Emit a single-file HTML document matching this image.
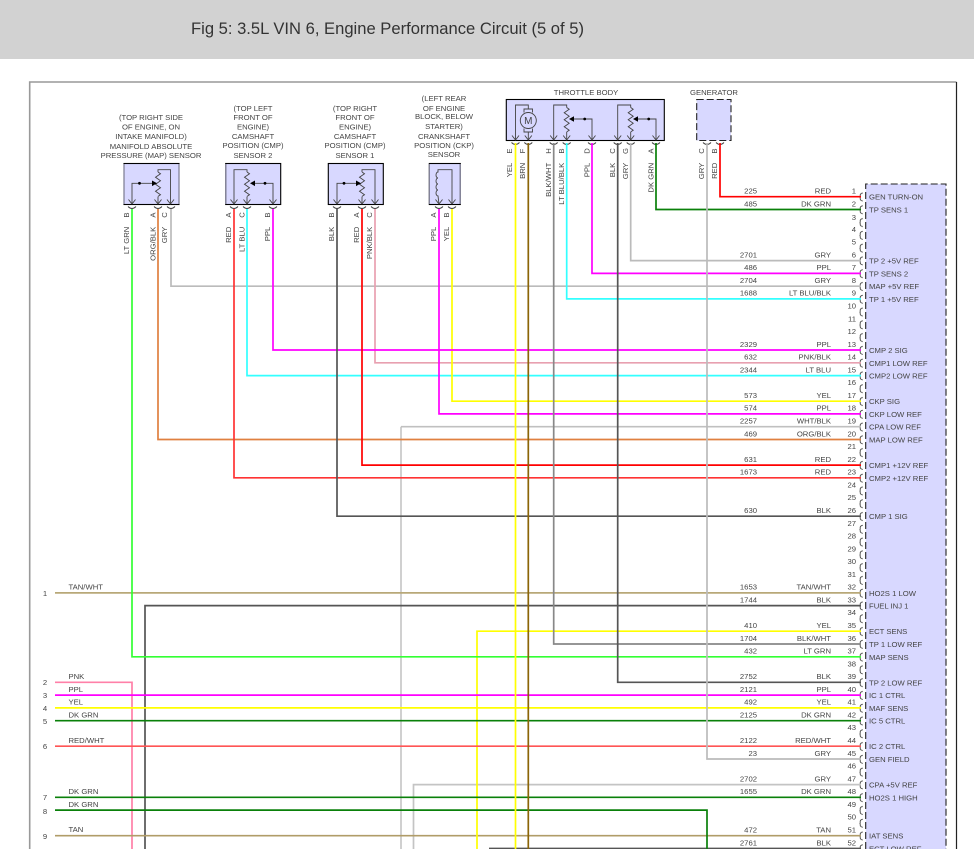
<!DOCTYPE html>
<html><head><meta charset="utf-8"><title>Fig 5</title>
<style>
html,body{margin:0;padding:0;background:#fff;width:974px;height:861px;overflow:hidden}
svg{display:block;position:absolute;left:0;top:0}
text{font-family:"Liberation Sans",Arial,sans-serif;font-size:7.7px;fill:#444}
.e{text-anchor:end}.m{text-anchor:middle}
.w path{fill:none;stroke-width:1.7}
.i{fill:none;stroke:#444;stroke-width:.9}
.b{fill:#d8d8ff;stroke:#000;stroke-width:1.1}
</style></head><body>
<svg width="974" height="861" viewBox="0 0 974 861" xmlns="http://www.w3.org/2000/svg">
<defs>
<pattern id="arc" patternUnits="userSpaceOnUse" x="856" y="190.3" width="10" height="12.78"><path d="M6.8 2.6q-3 .8-2.6 2.8q.2 1.4-.6 1.4q.8.2.6 1.4q-.2 2 2.6 2.6" fill="none" stroke="#444" stroke-width=".9"/></pattern>
</defs>
<rect x="0" y="0" width="974" height="59" fill="#d2d2d2"/>
<text x="191" y="34" textLength="393" lengthAdjust="spacingAndGlyphs" style="font-size:17px;fill:#333">Fig 5: 3.5L VIN 6, Engine Performance Circuit (5 of 5)</text>

<path d="M29.7 849V82H956.5" fill="none" stroke="#999" stroke-width="1.6"/>
<path d="M956.5 82V849" fill="none" stroke="#222" stroke-width="1.2"/>

<!-- ECM block -->
<rect x="865.7" y="184" width="80.3" height="670" fill="#d8d8ff"/>
<path d="M865.7 849V184H946V849" fill="none" stroke="#222" stroke-width="1.1" stroke-dasharray="7 3"/>
<rect x="858" y="190" width="8" height="664" fill="url(#arc)"/>

<!-- sensor boxes -->
<rect class="b" x="124" y="163.5" width="55" height="41"/>
<rect class="b" x="225.7" y="163.5" width="55" height="41"/>
<rect class="b" x="328.3" y="163.5" width="55" height="41"/>
<rect class="b" x="429.3" y="163.5" width="31" height="41"/>
<path d="M124 164V204M179 164V204M225.700 164V204M429.300 164V204M460.300 164V204" fill="none" stroke="#8a8aa0" stroke-width="1.2"/>
<rect class="b" x="506.3" y="99.5" width="158" height="41"/>
<rect x="696.7" y="99.5" width="34.3" height="41" fill="#d8d8ff" stroke="#222" stroke-width="1.1" stroke-dasharray="7 3"/>

<!-- sensor internals -->
<path class="i" d="M132 204V183.3H154M158 196.6V204M170.5 204V169.7H158V172"/>
<path class="i" d="M158 172l2.5 1.7l-5 3.5l5 3.5l-5 3.5l5 3.5l-5 3.500l5 3.500l-2.500 1.700"/>
<path d="M152 180.500l5 2.800l-5 2.800z" fill="#000"/><circle cx="139.500" cy="183.300" r="1.400" fill="#000"/>
<path class="i" d="M128.500 199.500L132 204L135.500 199.500M154.500 199.500L158 204L161.500 199.500M167 199.500L170.500 204L174 199.500"/>

<path class="i" d="M234 204V169.700H247V172M247 196.600V204M273 204V183.300H252"/>
<path class="i" d="M247 172l2.500 1.700l-5 3.500l5 3.500l-5 3.500l5 3.500l-5 3.500l5 3.500l-2.500 1.700"/>
<path d="M255 180.500l-5 2.800l5 2.800z" fill="#000"/><circle cx="265" cy="183.300" r="1.400" fill="#000"/>
<path class="i" d="M230.500 199.500L234 204L237.500 199.500M243.500 199.500L247 204L250.500 199.500M269.500 199.500L273 204L276.500 199.500"/>

<path class="i" d="M337 204V183.300H358M362 196.600V204M375 204V169.700H362V172"/>
<path class="i" d="M362 172l2.500 1.700l-5 3.500l5 3.500l-5 3.500l5 3.500l-5 3.500l5 3.500l-2.500 1.700"/>
<path d="M356 180.500l5 2.800l-5 2.800z" fill="#000"/><circle cx="344" cy="183.300" r="1.400" fill="#000"/>
<path class="i" d="M333.500 199.500L337 204L340.500 199.500M358.500 199.500L362 204L365.500 199.500M371.500 199.500L375 204L378.500 199.500"/>

<path class="i" d="M452 204V169.700H438V172a2 3 0 0 0 0 6a2 3 0 0 0 0 6a2 3 0 0 0 0 6a2 3 0 0 0 0 6L439 204"/>
<path class="i" d="M435.500 199.500L439 204L442.500 199.500M448.500 199.500L452 204L455.500 199.500"/>

<!-- throttle body internals -->
<path class="i" d="M515.500 140V105H528.300V109M528.300 132V140"/>
<circle cx="528.300" cy="120.500" r="8" fill="#d8d8ff" stroke="#444" stroke-width=".9"/>
<path class="i" d="M524 112.500V109H532.500V112.500M524 128.500V132H532.500V128.500"/>
<text class="m" x="528.300" y="124" style="font-size:10px">M</text>
<path class="i" d="M553.700 140V105H566.700V107.500M566.700 132V140M592 140V119H571"/>
<path class="i" d="M566.700 107.500l2.500 1.700l-5 3.500l5 3.500l-5 3.500l5 3.500l-5 3.500l5 3.500l-2.500 1.700"/>
<path d="M574 116.200l-5 2.800l5 2.800z" fill="#000"/><circle cx="584.700" cy="119" r="1.400" fill="#000"/>
<path class="i" d="M617.700 140V105H630.700V107.500M630.700 132V140M656 140V119H635"/>
<path class="i" d="M630.700 107.500l2.500 1.700l-5 3.500l5 3.500l-5 3.500l5 3.500l-5 3.500l5 3.500l-2.500 1.700"/>
<path d="M638 116.200l-5 2.800l5 2.800z" fill="#000"/><circle cx="648.700" cy="119" r="1.400" fill="#000"/>
<path class="i" d="M512 135.500L515.500 140L519 135.500M524.800 135.500L528.300 140L531.800 135.500M550.200 135.500L553.700 140L557.200 135.500M563.200 135.500L566.700 140L570.200 135.500M588.500 135.500L592 140L595.500 135.500M614.200 135.500L617.700 140L621.200 135.500M627.200 135.500L630.700 140L634.200 135.500M652.500 135.500L656 140L659.500 135.500"/>

<!-- connector cups -->
<path class="i" d="M128 206.500q4 4 8 0M154 206.500q4 4 8 0M167 206.500q4 4 8 0M230 206.500q4 4 8 0M243 206.500q4 4 8 0M269 206.500q4 4 8 0M333 206.500q4 4 8 0M358 206.500q4 4 8 0M371 206.500q4 4 8 0M435 206.500q4 4 8 0M448 206.500q4 4 8 0"/>
<path class="i" d="M511.500 142.500q4 4 8 0M524.300 142.500q4 4 8 0M549.700 142.500q4 4 8 0M562.700 142.500q4 4 8 0M588 142.500q4 4 8 0M613.700 142.500q4 4 8 0M626.700 142.500q4 4 8 0M652 142.500q4 4 8 0M703 142.500q4 4 8 0M716 142.500q4 4 8 0"/>

<!-- wires -->
<g class="w">
<path stroke="#c8c8c8" d="M401 849V426.700"/>
<path stroke="#c0c0c0" d="M401 426.700H861"/>
<path stroke="#c4c4c4" d="M413.500 849V784.600H861"/>
<path stroke="#bbb" d="M171 209V286.200H861"/>
<path stroke="#ff80a8" d="M55 682.300H132V849"/>
<path stroke="#555" d="M145 849V605.600H861"/>
<path stroke="#b8a878" d="M55 592.900H861"/>
<path stroke="#b09c68" d="M55 835.700H861"/>
<path stroke="#555" d="M489 848.500H861"/>
<path stroke="#ff0" d="M477 849V631.200H861"/>
<path stroke="#33ff33" d="M132 209V656.800H861"/>
<path stroke="#e8a0b0" d="M375 209V362.800H861"/>
<path stroke="#3ff" d="M247 209V375.600H861"/>
<path stroke="#ff0" d="M452 209V401.200H861"/>
<path stroke="#f0f" d="M273 209V350H861"/>
<path stroke="#f0f" d="M439 209V413.900H861"/>
<path stroke="#e08040" d="M158 209V439.500H861"/>
<path stroke="#f00" d="M362 209V465.100H861"/>
<path stroke="#f33" d="M234 209V477.800H861"/>
<path stroke="#555" d="M337 209V516.200H861"/>
<path stroke="#f0f" d="M55 695.100H861"/>
<path stroke="#ff0" d="M55 707.900H861"/>
<path stroke="#0a800a" d="M55 720.700H861"/>
<path stroke="#f55" d="M55 746.200H861"/>
<path stroke="#0a800a" d="M55 797.300H861"/>
<path stroke="#0a800a" d="M55 810.100H707V849"/>
<path stroke="#f00" d="M720 143V196.700H861"/>
<path stroke="#0a800a" d="M656 143V209.500H861"/>
<path stroke="#bbb" d="M630.700 143V260.600H861"/>
<path stroke="#f0f" d="M592 143V273.400H861"/>
<path stroke="#3ff" d="M566.700 143V298.900H861"/>
<path stroke="#888" d="M553.700 143V644H861"/>
<path stroke="#555" d="M617.700 143V682.300H861"/>
<path stroke="#bbb" d="M707 143V759H861"/>
<path stroke="#ff0" d="M515.500 143V849"/>
<path stroke="#8b6508" d="M528.300 143V849"/>
</g>

<!-- sensor titles -->
<g class="m">
<text class="m" x="151" y="120">(TOP RIGHT SIDE</text><text class="m" x="151" y="129.500">OF ENGINE, ON</text><text class="m" x="151" y="139">INTAKE MANIFOLD)</text><text class="m" x="151" y="149">MANIFOLD ABSOLUTE</text><text class="m" x="151" y="158">PRESSURE (MAP) SENSOR</text>
<text class="m" x="253" y="111">(TOP LEFT</text><text class="m" x="253" y="120">FRONT OF</text><text class="m" x="253" y="129.500">ENGINE)</text><text class="m" x="253" y="139">CAMSHAFT</text><text class="m" x="253" y="148">POSITION (CMP)</text><text class="m" x="253" y="158">SENSOR 2</text>
<text class="m" x="355" y="111">(TOP RIGHT</text><text class="m" x="355" y="120">FRONT OF</text><text class="m" x="355" y="129.500">ENGINE)</text><text class="m" x="355" y="139">CAMSHAFT</text><text class="m" x="355" y="148">POSITION (CMP)</text><text class="m" x="355" y="158">SENSOR 1</text>
<text class="m" x="444" y="101">(LEFT REAR</text><text class="m" x="444" y="111">OF ENGINE</text><text class="m" x="444" y="119">BLOCK, BELOW</text><text class="m" x="444" y="129">STARTER)</text><text class="m" x="444" y="139">CRANKSHAFT</text><text class="m" x="444" y="148">POSITION (CKP)</text><text class="m" x="444" y="157">SENSOR</text>
<text class="m" x="586" y="95">THROTTLE BODY</text><text class="m" x="714" y="95">GENERATOR</text>
</g>

<!-- rotated connector labels -->
<g>
<text class="m" transform="translate(129 215) rotate(-90)">B</text><text class="e" transform="translate(129 226.700) rotate(-90)">LT GRN</text>
<text class="m" transform="translate(155.500 215) rotate(-90)">A</text><text class="e" transform="translate(155.500 226.700) rotate(-90)">ORG/BLK</text>
<text class="m" transform="translate(167 215) rotate(-90)">C</text><text class="e" transform="translate(167 226.700) rotate(-90)">GRY</text>
<text class="m" transform="translate(231 215) rotate(-90)">A</text><text class="e" transform="translate(231 226.700) rotate(-90)">RED</text>
<text class="m" transform="translate(244.500 215) rotate(-90)">C</text><text class="e" transform="translate(244.500 226.700) rotate(-90)">LT BLU</text>
<text class="m" transform="translate(270 215) rotate(-90)">B</text><text class="e" transform="translate(270 226.700) rotate(-90)">PPL</text>
<text class="m" transform="translate(334 215) rotate(-90)">B</text><text class="e" transform="translate(334 226.700) rotate(-90)">BLK</text>
<text class="m" transform="translate(359 215) rotate(-90)">A</text><text class="e" transform="translate(359 226.700) rotate(-90)">RED</text>
<text class="m" transform="translate(372 215) rotate(-90)">C</text><text class="e" transform="translate(372 226.700) rotate(-90)">PNK/BLK</text>
<text class="m" transform="translate(436 215) rotate(-90)">A</text><text class="e" transform="translate(436 226.700) rotate(-90)">PPL</text>
<text class="m" transform="translate(449 215) rotate(-90)">B</text><text class="e" transform="translate(449 226.700) rotate(-90)">YEL</text>
<text class="m" transform="translate(512 151) rotate(-90)">E</text><text class="e" transform="translate(512 162.700) rotate(-90)">YEL</text>
<text class="m" transform="translate(525 151) rotate(-90)">F</text><text class="e" transform="translate(525 162.700) rotate(-90)">BRN</text>
<text class="m" transform="translate(551 151) rotate(-90)">H</text><text class="e" transform="translate(551 162.700) rotate(-90)">BLK/WHT</text>
<text class="m" transform="translate(564 151) rotate(-90)">B</text><text class="e" transform="translate(564 162.700) rotate(-90)">LT BLU/BLK</text>
<text class="m" transform="translate(589.500 151) rotate(-90)">D</text><text class="e" transform="translate(589.500 162.700) rotate(-90)">PPL</text>
<text class="m" transform="translate(615 151) rotate(-90)">C</text><text class="e" transform="translate(615 162.700) rotate(-90)">BLK</text>
<text class="m" transform="translate(628 151) rotate(-90)">G</text><text class="e" transform="translate(628 162.700) rotate(-90)">GRY</text>
<text class="m" transform="translate(653.500 151) rotate(-90)">A</text><text class="e" transform="translate(653.500 162.700) rotate(-90)">DK GRN</text>
<text class="m" transform="translate(704 151) rotate(-90)">C</text><text class="e" transform="translate(704 162.700) rotate(-90)">GRY</text>
<text class="m" transform="translate(717 151) rotate(-90)">B</text><text class="e" transform="translate(717 162.700) rotate(-90)">RED</text>
</g>

<!-- pin rows: wire number, colour, pin number, label -->
<g transform="translate(0 196.700)"><text class="e" x="757" y="-3.200">225</text><text class="e" x="831" y="-3.200">RED</text><text class="e" x="856" y="-3.200">1</text><text x="869" y="3">GEN TURN-ON</text></g>
<g transform="translate(0 209.500)"><text class="e" x="757" y="-3.200">485</text><text class="e" x="831" y="-3.200">DK GRN</text><text class="e" x="856" y="-3.200">2</text><text x="869" y="3">TP SENS 1</text></g>
<g transform="translate(0 222.300)"><text class="e" x="856" y="-2.500">3</text></g>
<g transform="translate(0 235)"><text class="e" x="856" y="-3.200">4</text></g>
<g transform="translate(0 247.800)"><text class="e" x="856" y="-3.200">5</text></g>
<g transform="translate(0 260.600)"><text class="e" x="757" y="-3.200">2701</text><text class="e" x="831" y="-3.200">GRY</text><text class="e" x="856" y="-3.200">6</text><text x="869" y="3">TP 2 +5V REF</text></g>
<g transform="translate(0 273.400)"><text class="e" x="757" y="-3.200">486</text><text class="e" x="831" y="-3.200">PPL</text><text class="e" x="856" y="-3.200">7</text><text x="869" y="3">TP SENS 2</text></g>
<g transform="translate(0 286.200)"><text class="e" x="757" y="-3.200">2704</text><text class="e" x="831" y="-3.200">GRY</text><text class="e" x="856" y="-3.200">8</text><text x="869" y="3">MAP +5V REF</text></g>
<g transform="translate(0 298.900)"><text class="e" x="757" y="-3.200">1688</text><text class="e" x="831" y="-3.200">LT BLU/BLK</text><text class="e" x="856" y="-3.200">9</text><text x="869" y="3">TP 1 +5V REF</text></g>
<g transform="translate(0 311.700)"><text class="e" x="856" y="-3.200">10</text></g>
<g transform="translate(0 324.500)"><text class="e" x="856" y="-3.200">11</text></g>
<g transform="translate(0 337.300)"><text class="e" x="856" y="-3.200">12</text></g>
<g transform="translate(0 350)"><text class="e" x="757" y="-3.200">2329</text><text class="e" x="831" y="-3.200">PPL</text><text class="e" x="856" y="-3.200">13</text><text x="869" y="3">CMP 2 SIG</text></g>
<g transform="translate(0 362.800)"><text class="e" x="757" y="-3.200">632</text><text class="e" x="831" y="-3.200">PNK/BLK</text><text class="e" x="856" y="-3.200">14</text><text x="869" y="3">CMP1 LOW REF</text></g>
<g transform="translate(0 375.600)"><text class="e" x="757" y="-3.200">2344</text><text class="e" x="831" y="-3.200">LT BLU</text><text class="e" x="856" y="-3.200">15</text><text x="869" y="3">CMP2 LOW REF</text></g>
<g transform="translate(0 388.400)"><text class="e" x="856" y="-3.200">16</text></g>
<g transform="translate(0 401.200)"><text class="e" x="757" y="-3.200">573</text><text class="e" x="831" y="-3.200">YEL</text><text class="e" x="856" y="-3.200">17</text><text x="869" y="3">CKP SIG</text></g>
<g transform="translate(0 413.900)"><text class="e" x="757" y="-3.200">574</text><text class="e" x="831" y="-3.200">PPL</text><text class="e" x="856" y="-3.200">18</text><text x="869" y="3">CKP LOW REF</text></g>
<g transform="translate(0 426.700)"><text class="e" x="757" y="-3.200">2257</text><text class="e" x="831" y="-3.200">WHT/BLK</text><text class="e" x="856" y="-3.200">19</text><text x="869" y="3">CPA LOW REF</text></g>
<g transform="translate(0 439.500)"><text class="e" x="757" y="-3.200">469</text><text class="e" x="831" y="-3.200">ORG/BLK</text><text class="e" x="856" y="-3.200">20</text><text x="869" y="3">MAP LOW REF</text></g>
<g transform="translate(0 452.300)"><text class="e" x="856" y="-3.200">21</text></g>
<g transform="translate(0 465.100)"><text class="e" x="757" y="-3.200">631</text><text class="e" x="831" y="-3.200">RED</text><text class="e" x="856" y="-3.200">22</text><text x="869" y="3">CMP1 +12V REF</text></g>
<g transform="translate(0 477.800)"><text class="e" x="757" y="-3.200">1673</text><text class="e" x="831" y="-3.200">RED</text><text class="e" x="856" y="-3.200">23</text><text x="869" y="3">CMP2 +12V REF</text></g>
<g transform="translate(0 490.600)"><text class="e" x="856" y="-3.200">24</text></g>
<g transform="translate(0 503.400)"><text class="e" x="856" y="-3.200">25</text></g>
<g transform="translate(0 516.200)"><text class="e" x="757" y="-3.200">630</text><text class="e" x="831" y="-3.200">BLK</text><text class="e" x="856" y="-3.200">26</text><text x="869" y="3">CMP 1 SIG</text></g>
<g transform="translate(0 529)"><text class="e" x="856" y="-3.200">27</text></g>
<g transform="translate(0 541.700)"><text class="e" x="856" y="-3.200">28</text></g>
<g transform="translate(0 554.500)"><text class="e" x="856" y="-3.200">29</text></g>
<g transform="translate(0 567.300)"><text class="e" x="856" y="-3.200">30</text></g>
<g transform="translate(0 580.100)"><text class="e" x="856" y="-3.200">31</text></g>
<g transform="translate(0 592.900)"><text class="e" x="757" y="-3.200">1653</text><text class="e" x="831" y="-3.200">TAN/WHT</text><text class="e" x="856" y="-3.200">32</text><text x="869" y="3">HO2S 1 LOW</text></g>
<g transform="translate(0 605.600)"><text class="e" x="757" y="-3.200">1744</text><text class="e" x="831" y="-3.200">BLK</text><text class="e" x="856" y="-3.200">33</text><text x="869" y="3">FUEL INJ 1</text></g>
<g transform="translate(0 618.400)"><text class="e" x="856" y="-3.200">34</text></g>
<g transform="translate(0 631.200)"><text class="e" x="757" y="-3.200">410</text><text class="e" x="831" y="-3.200">YEL</text><text class="e" x="856" y="-3.200">35</text><text x="869" y="3">ECT SENS</text></g>
<g transform="translate(0 644)"><text class="e" x="757" y="-3.200">1704</text><text class="e" x="831" y="-3.200">BLK/WHT</text><text class="e" x="856" y="-3.200">36</text><text x="869" y="3">TP 1 LOW REF</text></g>
<g transform="translate(0 656.800)"><text class="e" x="757" y="-3.200">432</text><text class="e" x="831" y="-3.200">LT GRN</text><text class="e" x="856" y="-3.200">37</text><text x="869" y="3">MAP SENS</text></g>
<g transform="translate(0 669.500)"><text class="e" x="856" y="-3.200">38</text></g>
<g transform="translate(0 682.300)"><text class="e" x="757" y="-3.200">2752</text><text class="e" x="831" y="-3.200">BLK</text><text class="e" x="856" y="-3.200">39</text><text x="869" y="3">TP 2 LOW REF</text></g>
<g transform="translate(0 695.100)"><text class="e" x="757" y="-3.200">2121</text><text class="e" x="831" y="-3.200">PPL</text><text class="e" x="856" y="-3.200">40</text><text x="869" y="3">IC 1 CTRL</text></g>
<g transform="translate(0 707.900)"><text class="e" x="757" y="-3.200">492</text><text class="e" x="831" y="-3.200">YEL</text><text class="e" x="856" y="-3.200">41</text><text x="869" y="3">MAF SENS</text></g>
<g transform="translate(0 720.700)"><text class="e" x="757" y="-3.200">2125</text><text class="e" x="831" y="-3.200">DK GRN</text><text class="e" x="856" y="-3.200">42</text><text x="869" y="3">IC 5 CTRL</text></g>
<g transform="translate(0 733.400)"><text class="e" x="856" y="-3.200">43</text></g>
<g transform="translate(0 746.200)"><text class="e" x="757" y="-3.200">2122</text><text class="e" x="831" y="-3.200">RED/WHT</text><text class="e" x="856" y="-3.200">44</text><text x="869" y="3">IC 2 CTRL</text></g>
<g transform="translate(0 759)"><text class="e" x="757" y="-3.200">23</text><text class="e" x="831" y="-3.200">GRY</text><text class="e" x="856" y="-3.200">45</text><text x="869" y="3">GEN FIELD</text></g>
<g transform="translate(0 771.800)"><text class="e" x="856" y="-3.200">46</text></g>
<g transform="translate(0 784.600)"><text class="e" x="757" y="-3.200">2702</text><text class="e" x="831" y="-3.200">GRY</text><text class="e" x="856" y="-3.200">47</text><text x="869" y="3">CPA +5V REF</text></g>
<g transform="translate(0 797.300)"><text class="e" x="757" y="-3.200">1655</text><text class="e" x="831" y="-3.200">DK GRN</text><text class="e" x="856" y="-3.200">48</text><text x="869" y="3">HO2S 1 HIGH</text></g>
<g transform="translate(0 810.100)"><text class="e" x="856" y="-3.200">49</text></g>
<g transform="translate(0 822.900)"><text class="e" x="856" y="-3.200">50</text></g>
<g transform="translate(0 835.700)"><text class="e" x="757" y="-3.200">472</text><text class="e" x="831" y="-3.200">TAN</text><text class="e" x="856" y="-3.200">51</text><text x="869" y="3">IAT SENS</text></g>
<g transform="translate(0 848.500)"><text class="e" x="757" y="-3.200">2761</text><text class="e" x="831" y="-3.200">BLK</text><text class="e" x="856" y="-3.200">52</text><text x="869" y="3">ECT LOW REF</text></g>

<!-- left side inputs -->
<text class="m" x="45" y="596">1</text><text x="68.500" y="589.500">TAN/WHT</text>
<text class="m" x="45" y="685">2</text><text x="68.500" y="679">PNK</text>
<text class="m" x="45" y="698">3</text><text x="68.500" y="692">PPL</text>
<text class="m" x="45" y="711">4</text><text x="68.500" y="704.500">YEL</text>
<text class="m" x="45" y="724">5</text><text x="68.500" y="717.500">DK GRN</text>
<text class="m" x="45" y="749">6</text><text x="68.500" y="743">RED/WHT</text>
<text class="m" x="45" y="800">7</text><text x="68.500" y="794">DK GRN</text>
<text class="m" x="45" y="814">8</text><text x="68.500" y="807">DK GRN</text>
<text class="m" x="45" y="839">9</text><text x="68.500" y="832">TAN</text>

<rect x="0" y="849" width="974" height="12" fill="#fff"/>
</svg>
</body></html>
